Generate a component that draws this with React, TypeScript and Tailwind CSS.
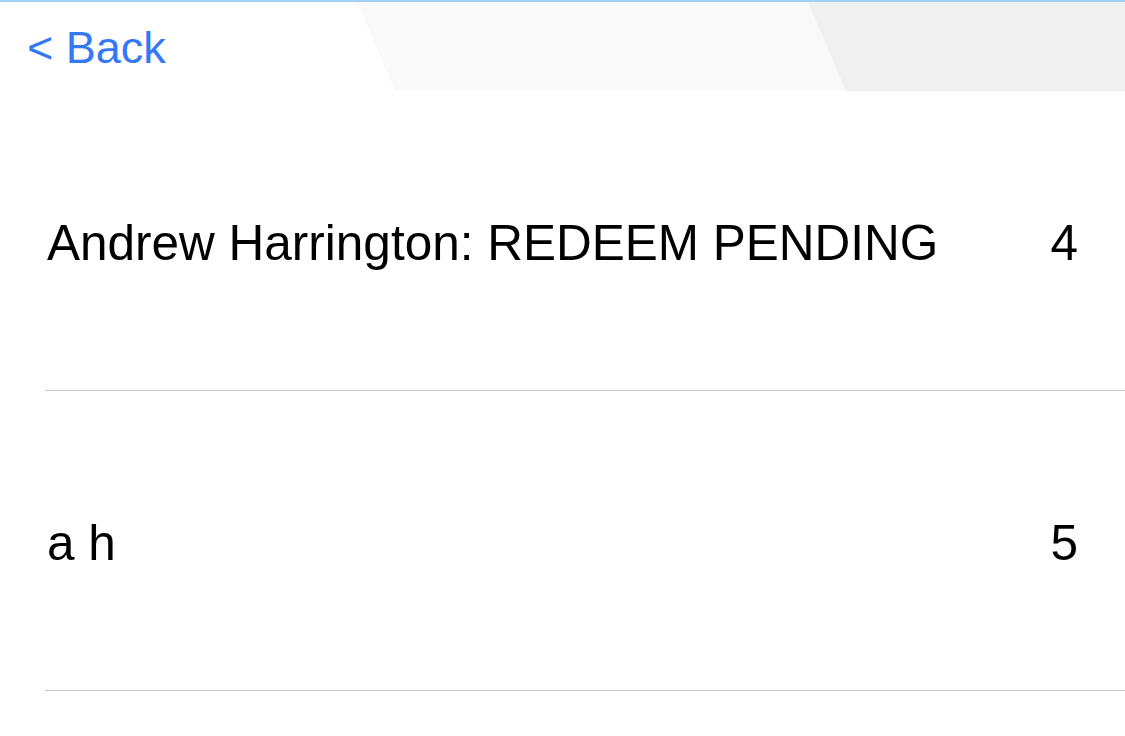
import React from "react";

const rows = [
  { label: "Andrew Harrington: REDEEM PENDING", value: "4" },
  { label: "a h", value: "5" },
];

export default function App() {
  return (
    <div className="w-[1125px] h-[736px] bg-white overflow-hidden" style={{ fontFamily: '"Liberation Sans", Arial, sans-serif' }}>
      <header className="relative h-[91px] border-t-2 border-[#9fd2ef]">
        <svg className="absolute inset-0 w-full h-full" viewBox="0 0 1125 89" preserveAspectRatio="none" aria-hidden>
          <polygon points="357,0 1125,0 1125,89 395,89" fill="#f9f9f9" />
          <polygon points="808,0 1125,0 1125,89 846,89" fill="#f0f0f0" />
        </svg>
        <div className="relative flex items-center h-full pl-[27px] pt-[2px]">
          <span className="text-[45px] leading-none text-[#3478f6]">&lt; Back</span>
        </div>
      </header>
      <div>
        {rows.map((r) => (
          <div key={r.label} className="pl-[45px]">
            <div className="flex items-center justify-between h-[300px] border-b border-[#c8c7cc] pr-[47px] pl-[2px] pt-[4px]">
              <span className="text-[49.5px] leading-none text-black">{r.label}</span>
              <span className="text-[49.5px] leading-none text-black">{r.value}</span>
            </div>
          </div>
        ))}
      </div>
    </div>
  );
}
